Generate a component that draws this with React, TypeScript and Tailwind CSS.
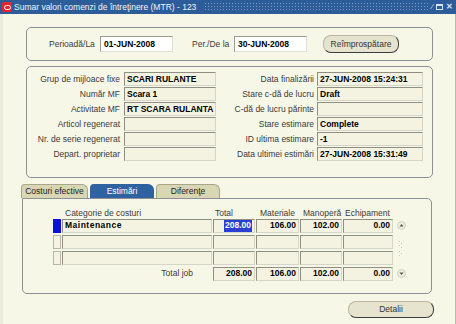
import React from "react";

// câmp read-only / editabil în stil Oracle Forms
function Field({ className, children }: { className: string; children?: React.ReactNode }) {
  return (
    <div
      className={
        "h-[14px] border border-t-[#8e8e82] border-l-[#8e8e82] border-b-[#d6d6c6] border-r-[#d6d6c6] flex items-center px-[2px] overflow-hidden whitespace-nowrap font-bold text-[8.5px] text-black " +
        className
      }
    >
      {children}
    </div>
  );
}

function Button({ className, label }: { className: string; label: string }) {
  return (
    <div
      className={
        "flex items-center justify-center rounded-[8px] bg-[#e6e4cf] border border-[#b9b7a2] border-r-[#3d3d3d] border-b-[#3d3d3d] border-r-[1.5px] text-[8.5px] text-[#333]" +
        " " +
        className
      }
    >
      {label}
    </div>
  );
}

const info = [
  ["Grup de mijloace fixe", "SCARI RULANTE", "Data finalizării", "27-JUN-2008 15:24:31"],
  ["Număr MF", "Scara 1", "Stare c-dă de lucru", "Draft"],
  ["Activitate MF", "RT SCARA RULANTA", "C-dă de lucru părinte", ""],
  ["Articol regenerat", "", "Stare estimare", "Complete"],
  ["Nr. de serie regenerat", "", "ID ultima estimare", "-1"],
  ["Depart. proprietar", "", "Data ultimei estimări", "27-JUN-2008 15:31:49"],
];

const cell = "bg-[#f4f3e2] justify-end";

export default function App() {
  return (
    <div className="w-[456px] h-[324px] overflow-hidden bg-[#f7f7e8] flex flex-col font-['Liberation_Sans',Arial,sans-serif] text-[#3a3a3a]">
      {/* bara de titlu */}
      <div className="h-[14px] shrink-0 flex items-center bg-[#2d5d99]">
        <div className="ml-[2px] w-[10px] h-[10px] rounded-[2px] bg-[#e3262b] flex items-center justify-center">
          <div className="w-[7px] h-[5px] rounded-full border border-white" />
        </div>
        <span className="ml-[2px] text-[8.5px] text-[#f2f5fa] whitespace-nowrap">
          Sumar valori comenzi de întreţinere (MTR) - 123
        </span>
        <div className="ml-[8px] flex-1 h-[10px] bg-[radial-gradient(circle,#7b9dcb_0.8px,transparent_1px)] bg-[length:3px_3px]" />
        <div className="flex items-center gap-[3px] pl-[3px] pr-[3px] text-[8px] leading-none text-[#d8e2f0]">
          <span>⁄</span>
          <span className="w-[7px] h-[6px] border border-[#d8e2f0] border-t-2" />
          <span className="font-bold">✕</span>
        </div>
      </div>

      <div className="flex-1 flex flex-col border-l-[3px] border-[#ecebda] border-r border-r-[#b8b8a8]">
        {/* perioada */}
        <div className="ml-[23px] mt-[13px] w-[407px] h-[34px] rounded-[5px] border border-[#8d9196] flex items-center text-[8.5px]">
          <span className="ml-[22px] w-[51px] whitespace-nowrap">Perioadă/La</span>
          <div className="w-[73px] h-[16px] bg-white border border-[#9a9a8e] border-b-[#e0e0d4] border-r-[#e0e0d4] flex items-center px-[3px] font-bold text-[8.5px] text-black">
            01-JUN-2008
          </div>
          <span className="ml-[19px] w-[42px] whitespace-nowrap">Per./De la</span>
          <div className="w-[73px] h-[16px] bg-white border border-[#9a9a8e] border-b-[#e0e0d4] border-r-[#e0e0d4] flex items-center px-[3px] font-bold text-[8.5px] text-black">
            30-JUN-2008
          </div>
          <Button className="ml-[16px] w-[76px] h-[18px]" label="Reîmprospătare" />
        </div>

        {/* detalii mijloc fix */}
        <div className="ml-[23px] mt-[5px] w-[407px] h-[112px] rounded-[5px] border border-[#8d9196] pt-[5px] flex flex-col gap-[1px] text-[8.5px]">
          {info.map(([l1, v1, l2, v2]) => (
            <div key={l1} className="flex items-center h-[14px]">
              <span className="w-[97px] pr-[4px] text-right whitespace-nowrap">{l1}</span>
              <Field className="w-[92px] bg-[#f4f3e2]">{v1}</Field>
              <span className="w-[101px] pr-[3px] text-right whitespace-nowrap">{l2}</span>
              <Field className="w-[106px] bg-[#f4f3e2]">{v2}</Field>
            </div>
          ))}
        </div>

        {/* taburi */}
        <div className="ml-[18px] mt-[6px] h-[14px] flex items-end gap-[2px] text-[8.5px]">
          <div className="w-[67px] h-[14px] rounded-t-[4px] rounded-tr-[6px] bg-[#d9d7b3] border border-b-0 border-[#a8a68a] flex items-center justify-center text-[#222]">
            Costuri efective
          </div>
          <div className="w-[64px] h-[14px] rounded-t-[4px] rounded-tr-[6px] bg-[#2e62a0] flex items-center justify-center text-white">
            Estimări
          </div>
          <div className="w-[64px] h-[14px] rounded-t-[4px] rounded-tr-[6px] bg-[#d9d7b3] border border-b-0 border-[#a8a68a] flex items-center justify-center text-[#222]">
            Diferenţe
          </div>
        </div>

        <div className="ml-[19px] w-[410px] h-[96px] rounded-[5px] rounded-tl-none border border-[#8d9196] flex flex-col text-[8.5px]">
          {/* antet coloane */}
          <div className="mt-[9px] h-[10px] flex items-center pl-[30px] whitespace-nowrap">
            <span className="w-[9px]" />
            <span className="w-[151px] pl-[3px]">Categorie de costuri</span>
            <span className="w-[43px] pl-[2px]">Total</span>
            <span className="w-[44px] pl-[4px]">Materiale</span>
            <span className="w-[43px] pl-[3px]">Manoperă</span>
            <span className="w-[51px] pl-[2px]">Echipament</span>
          </div>

          <div className="flex flex-col gap-[1px]">
            {[0, 1, 2].map((i) => (
              <div key={i} className="h-[15px] flex items-center gap-[1px] pl-[30px]">
                <div
                  className={
                    i === 0
                      ? "w-[8px] h-[14px] bg-[#0a12d8]"
                      : "w-[8px] h-[14px] bg-[#f4f3e2] border border-[#b7b7a8]"
                  }
                />
                <Field className="w-[150px] bg-[#f4f3e2] text-[8.5px] tracking-[0.5px]">
                  {i === 0 ? "Maintenance" : ""}
                </Field>
                {i === 0 ? (
                  <>
                    <Field className="w-[42px] bg-[#f4f3e2] justify-end">
                      <span className="bg-[#2a3fd0] text-white px-[1px]">208.00</span>
                    </Field>
                    <Field className={"w-[43px] " + cell}>106.00</Field>
                    <Field className={"w-[42px] " + cell}>102.00</Field>
                    <Field className={"w-[50px] " + cell}>0.00</Field>
                  </>
                ) : (
                  <>
                    <Field className={"w-[42px] " + cell} />
                    <Field className={"w-[43px] " + cell} />
                    <Field className={"w-[42px] " + cell} />
                    <Field className={"w-[50px] " + cell} />
                  </>
                )}
                <div className="ml-[2px] w-[10px] h-[14px] flex items-center justify-center">
                  {i === 0 && (
                    <svg width="9" height="9" viewBox="0 0 9 9">
                      <circle cx="4.5" cy="4.5" r="4" fill="#eeeedf" stroke="#c9c9b9" strokeWidth="0.8" />
                      <path d="M2.5 5.5 L4.5 3 L6.5 5.5 Z" fill="#555" />
                    </svg>
                  )}
                  {i === 1 && (
                    <svg width="4" height="14" viewBox="0 0 4 14">
                      <g fill="#c9c9b6">
                        <rect x="0" y="6" width="1" height="1" />
                        <rect x="2" y="8" width="1" height="1" />
                        <rect x="0" y="10" width="1" height="1" />
                        <rect x="2" y="12" width="1" height="1" />
                      </g>
                    </svg>
                  )}
                  {i === 2 && (
                    <svg width="4" height="14" viewBox="0 0 4 14">
                      <g fill="#c9c9b6">
                        <rect x="0" y="0" width="1" height="1" />
                        <rect x="2" y="2" width="1" height="1" />
                        <rect x="0" y="4" width="1" height="1" />
                      </g>
                    </svg>
                  )}
                </div>
              </div>
            ))}

            {/* total job */}
            <div className="h-[15px] flex items-center gap-[1px] pl-[30px]">
              <span className="w-[8px]" />
              <span className="w-[150px] pr-[19px] text-right">Total job</span>
              <Field className={"w-[42px] " + cell}>208.00</Field>
              <Field className={"w-[43px] " + cell}>106.00</Field>
              <Field className={"w-[42px] " + cell}>102.00</Field>
              <Field className={"w-[50px] " + cell}>0.00</Field>
              <div className="ml-[2px] w-[10px] h-[14px] flex items-center justify-center">
                <svg width="9" height="9" viewBox="0 0 9 9">
                  <circle cx="4.5" cy="4.5" r="4" fill="#eeeedf" stroke="#c9c9b9" strokeWidth="0.8" />
                  <path d="M2.5 3.5 L4.5 6 L6.5 3.5 Z" fill="#555" />
                </svg>
              </div>
            </div>
          </div>
        </div>

        <div className="mt-[7px] flex justify-end pr-[21px]">
          <Button className="w-[86px] h-[17px]" label="Detalii" />
        </div>
      </div>
    </div>
  );
}
